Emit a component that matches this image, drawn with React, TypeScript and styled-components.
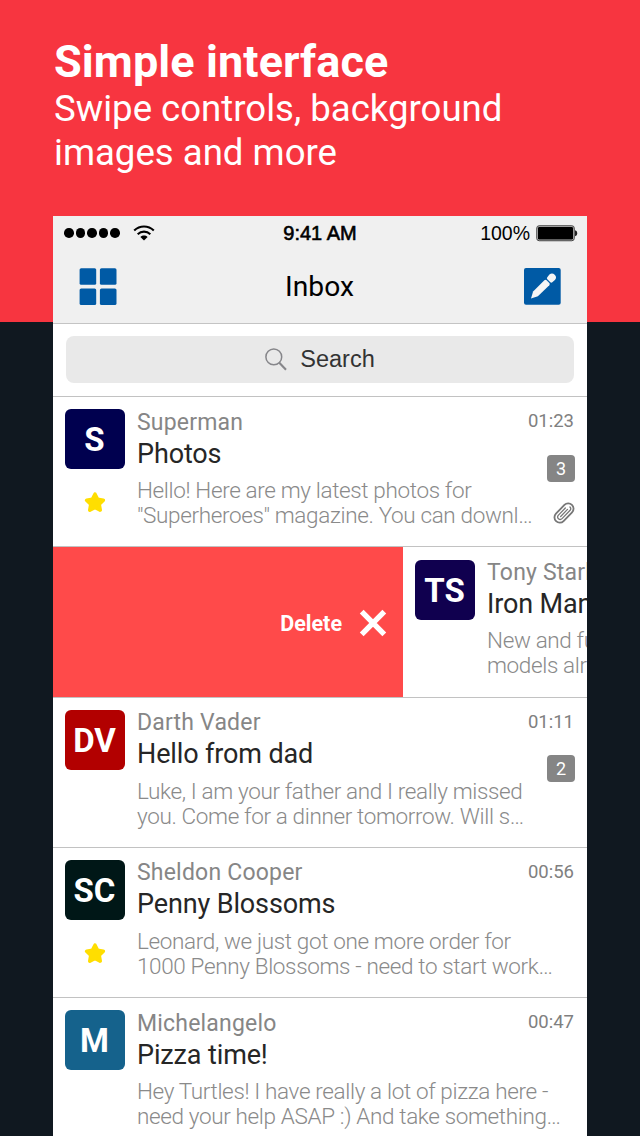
import styled, { createGlobalStyle } from "styled-components";

interface Mail {
  id: number;
  initials: string;
  color: string;
  sender: string;
  subject: string;
  preview: string[];
  time?: string;
  count?: number;
  starred?: boolean;
  attachment?: boolean;
  swiped?: boolean;
}

const mails: Mail[] = [
  {
    id: 1,
    initials: "S",
    color: "#00004f",
    sender: "Superman",
    subject: "Photos",
    preview: ["Hello! Here are my latest photos for", '"Superheroes" magazine. You can downl…'],
    time: "01:23",
    count: 3,
    starred: true,
    attachment: true,
  },
  {
    id: 2,
    initials: "TS",
    color: "#10004f",
    sender: "Tony Stark",
    subject: "Iron Man",
    preview: ["New and full", "models already"],
    swiped: true,
  },
  {
    id: 3,
    initials: "DV",
    color: "#b20000",
    sender: "Darth Vader",
    subject: "Hello from dad",
    preview: ["Luke, I am your father and I really missed", "you. Come for a dinner tomorrow. Will s…"],
    time: "01:11",
    count: 2,
  },
  {
    id: 4,
    initials: "SC",
    color: "#001717",
    sender: "Sheldon Cooper",
    subject: "Penny Blossoms",
    preview: ["Leonard, we just got one more order for", "1000 Penny Blossoms - need to start work…"],
    time: "00:56",
    starred: true,
  },
  {
    id: 5,
    initials: "M",
    color: "#15628c",
    sender: "Michelangelo",
    subject: "Pizza time!",
    preview: ["Hey Turtles! I have really a lot of pizza here -", "need your help ASAP :) And take something…"],
    time: "00:47",
  },
];

const WifiIcon = () => (
  <svg width="22" height="16" viewBox="0 0 22 16" fill="none" stroke="#000" strokeWidth="2.1">
    <path d="M1.2 5.6C6.8.2 15.2.2 20.8 5.6" />
    <path d="M4.7 9.2c3.6-3.4 9-3.4 12.6 0" />
    <path d="M7.4 11.9c2.1-1.9 5.1-1.9 7.2 0L11 15.6z" fill="#000" stroke="none" />
  </svg>
);

const BatteryIcon = () => (
  <svg width="42" height="17" viewBox="0 0 42 17">
    <rect x=".75" y=".75" width="37.5" height="15" rx="2.4" fill="#bbb" stroke="#444" strokeWidth="1" />
    <rect x="2" y="2" width="35" height="12.5" rx="1.2" fill="#000" />
    <path d="M39 5.3c1.6.4 2.2 1.5 2.2 3s-.6 2.6-2.2 3z" fill="#222" />
  </svg>
);

const GridIcon = () => (
  <svg width="38" height="38" viewBox="0 0 38 38" fill="#005aa5">
    <rect x=".6" y=".2" width="16.6" height="16.6" rx="1.6" />
    <rect x="20.9" y=".2" width="16.6" height="16.6" rx="1.6" />
    <rect x=".6" y="20.4" width="16.6" height="16.6" rx="1.6" />
    <rect x="20.9" y="20.4" width="16.6" height="16.6" rx="1.6" />
  </svg>
);

const ComposeIcon = () => (
  <svg width="37" height="37" viewBox="0 0 37 37">
    <rect width="36.7" height="36.7" rx="2" fill="#005aa5" />
    <g fill="#f5f5f5">
      <path d="M7 30.4L9.1 23.4 20.4 12.2q1.1-.9 2.2.1l2.7 2.7q1 1.1 0 2.2L13.9 28.2z" />
      <path d="M23.3 11.2q-.9-1 0-2l2.1-2.6a3.9 3.9 0 0 1 5.5 5.5l-2.6 2.2q-1 .8-2 0z" />
    </g>
  </svg>
);

const SearchIcon = () => (
  <svg width="22" height="23" viewBox="0 0 22 23" fill="none" stroke="#86868a">
    <circle cx="8.8" cy="8.9" r="7.9" strokeWidth="1.5" />
    <path d="M14.3 14.7l6.7 7" strokeWidth="2.1" />
  </svg>
);

const StarIcon = () => (
  <svg width="22" height="21" viewBox="0 0 22 21" fill="#ffde00" stroke="#ffde00" strokeWidth="3.6" strokeLinejoin="round">
    <path d="M11 2.2l2.6 5.1 5.7.9-4.1 4.1 1 5.8-5.2-2.6-5.2 2.6 1-5.8-4.1-4.1 5.7-.9z" />
  </svg>
);

const ClipIcon = () => (
  <svg width="22" height="22" viewBox="-11 -11 22 22" fill="none" stroke="#777" strokeLinecap="round">
    <g transform="rotate(-46)">
      <rect x="-11.4" y="-5.3" width="22.8" height="10.6" rx="5.3" strokeWidth="1.8" />
      <path d="M4.5-2.5H-5.4a2.5 2.5 0 0 0 0 5H6.2a2.5 2.5 0 0 0 2.3-2.4M-4.8 0H5" strokeWidth="1.3" />
    </g>
  </svg>
);

const CrossIcon = () => (
  <svg width="28" height="28" viewBox="0 0 28 28" stroke="#fff" strokeWidth="5.4">
    <path d="M2.7 2.7l22.6 22.6M25.3 2.7L2.7 25.3" />
  </svg>
);

const MailItem = ({ mail }: { mail: Mail }) => (
  <MailRow>
    {mail.swiped && (
      <DeleteAction>
        Delete
        <CrossIcon />
      </DeleteAction>
    )}
    <MailContent>
      <SideColumn>
        <Avatar $color={mail.color}>{mail.initials}</Avatar>
        {mail.starred && <StarIcon />}
      </SideColumn>
      <MailText>
        <Sender>{mail.sender}</Sender>
        <Subject>{mail.subject}</Subject>
        {mail.preview.map((line) => (
          <Preview key={line}>{line}</Preview>
        ))}
      </MailText>
      {!mail.swiped && (
        <MetaColumn>
          <Time>{mail.time}</Time>
          {mail.count && <Count>{mail.count}</Count>}
          {mail.attachment && <ClipIcon />}
        </MetaColumn>
      )}
    </MailContent>
  </MailRow>
);

export default function App() {
  return (
    <Page>
      <GlobalStyle />
      <Headline>
        <Title>Simple interface</Title>
        <Subtitle>Swipe controls, background</Subtitle>
        <Subtitle>images and more</Subtitle>
      </Headline>
      <Phone>
        <StatusBar>
          <Signal>
            {Array.from({ length: 5 }).map((_, index) => (
              <SignalDot key={index} />
            ))}
            <WifiIcon />
          </Signal>
          <Clock>9:41 AM</Clock>
          <Battery>
            100%
            <BatteryIcon />
          </Battery>
        </StatusBar>
        <NavBar>
          <GridIcon />
          <NavTitle>Inbox</NavTitle>
          <ComposeIcon />
        </NavBar>
        <SearchArea>
          <SearchField>
            <SearchIcon />
            Search
          </SearchField>
        </SearchArea>
        {mails.map((mail) => (
          <MailItem key={mail.id} mail={mail} />
        ))}
      </Phone>
    </Page>
  );
}

const GlobalStyle = createGlobalStyle`
  * {
    box-sizing: border-box;
  }

  body {
    margin: 0;
    overflow: hidden;
  }

  svg {
    display: block;
    flex-shrink: 0;
  }
`;

const Page = styled.main`
  width: 640px;
  height: 1136px;
  overflow: hidden;
  background: linear-gradient(#f73540 322px, #101820 322px);
  font-family: Roboto, sans-serif;
`;

const Headline = styled.header`
  height: 216px;
  padding: 36px 0 0 54px;
  color: #ffffff;
  white-space: nowrap;
`;

const Title = styled.h1`
  margin: 0;
  font-size: 45px;
  line-height: 51px;
  font-weight: 700;
  letter-spacing: 0.1px;
`;

const Subtitle = styled.p`
  margin: 0;
  font-size: 36.6px;
  line-height: 44px;
  font-weight: 400;
`;

const Phone = styled.section`
  width: 534px;
  height: 920px;
  margin-left: 53px;
  overflow: hidden;
  background: #ffffff;
`;

const StatusBar = styled.div`
  display: grid;
  grid-template-columns: 1fr auto 1fr;
  align-items: center;
  height: 34px;
  padding: 0 9px 0 11px;
  background: #f0f0f0;
  color: #000000;
  font-family: "Liberation Sans", sans-serif;
`;

const Signal = styled.div`
  display: flex;
  align-items: center;
  gap: 2px;

  svg {
    margin-left: 11px;
  }
`;

const SignalDot = styled.span`
  width: 9.6px;
  height: 9.6px;
  border-radius: 50%;
  background: #000000;
`;

const Clock = styled.span`
  margin-right: 2px;
  font-size: 20px;
  -webkit-text-stroke: 0.6px #000000;
`;

const Battery = styled.div`
  display: flex;
  align-items: center;
  justify-content: flex-end;
  gap: 6px;
  font-size: 19.5px;
`;

const NavBar = styled.nav`
  display: flex;
  align-items: center;
  justify-content: space-between;
  height: 74px;
  padding: 0 26px;
  background: #f0f0f0;
  border-bottom: 1px solid #c4c4c4;
`;

const NavTitle = styled.h2`
  margin: 0 2px 0 0;
  font-size: 28.2px;
  font-weight: 400;
  color: #000000;
`;

const SearchArea = styled.div`
  height: 72px;
  padding: 12px 13px 0;
`;

const SearchField = styled.div`
  display: flex;
  align-items: center;
  justify-content: center;
  gap: 13px;
  height: 47px;
  border-radius: 8px;
  background: #e9e9e9;
  color: #333333;
  font-family: "Liberation Sans", sans-serif;
  font-size: 23.5px;
`;

const MailRow = styled.article`
  display: flex;
  height: 150.25px;
  border-top: 1px solid #c2c2c2;
  overflow: hidden;
`;

const DeleteAction = styled.div`
  flex: 0 0 350px;
  display: flex;
  align-items: center;
  justify-content: flex-end;
  gap: 16.5px;
  padding: 3px 16.5px 0 0;
  background: #ff4a4a;
  color: #ffffff;
  font-size: 21.5px;
  font-weight: 700;
`;

const MailContent = styled.div`
  display: flex;
  flex-shrink: 0;
  width: 534px;
  padding: 0 12px;
`;

const SideColumn = styled.div`
  display: flex;
  flex-direction: column;
  align-items: center;
  gap: 23px;
  width: 60px;
  margin-right: 12px;
  padding-top: 12.4px;
`;

const Avatar = styled.div<{ $color: string }>`
  display: flex;
  align-items: center;
  justify-content: center;
  width: 60px;
  height: 60px;
  flex-shrink: 0;
  padding: 1px 1px 0 0;
  border-radius: 6px;
  background: ${({ $color }) => $color};
  color: #ffffff;
  font-size: 33px;
  font-weight: 700;
`;

const MailText = styled.div`
  flex: 1;
  min-width: 0;
  padding-top: 11.5px;
  white-space: nowrap;
`;

const Sender = styled.div`
  font-size: 23px;
  line-height: 28px;
  letter-spacing: 0.2px;
  color: #868686;
`;

const Subject = styled.div`
  margin-bottom: 7.7px;
  font-size: 27px;
  line-height: 34px;
  letter-spacing: -0.13px;
  color: #262626;
`;

const Preview = styled.div`
  font-size: 22.5px;
  line-height: 25px;
  font-weight: 300;
  letter-spacing: -0.36px;
  color: #8a8a8a;
`;

const MetaColumn = styled.div`
  display: flex;
  flex-direction: column;
  align-items: flex-end;
  padding-top: 13.4px;
`;

const Time = styled.time`
  margin-right: 1px;
  font-size: 18.5px;
  line-height: 22px;
  color: #808080;
`;

const Count = styled.span`
  width: 28.4px;
  height: 27px;
  margin: 22.2px -0.2px 20.8px 0;
  border-radius: 4px;
  background: #858585;
  color: #ffffff;
  font-size: 18px;
  line-height: 27px;
  text-align: center;
`;
